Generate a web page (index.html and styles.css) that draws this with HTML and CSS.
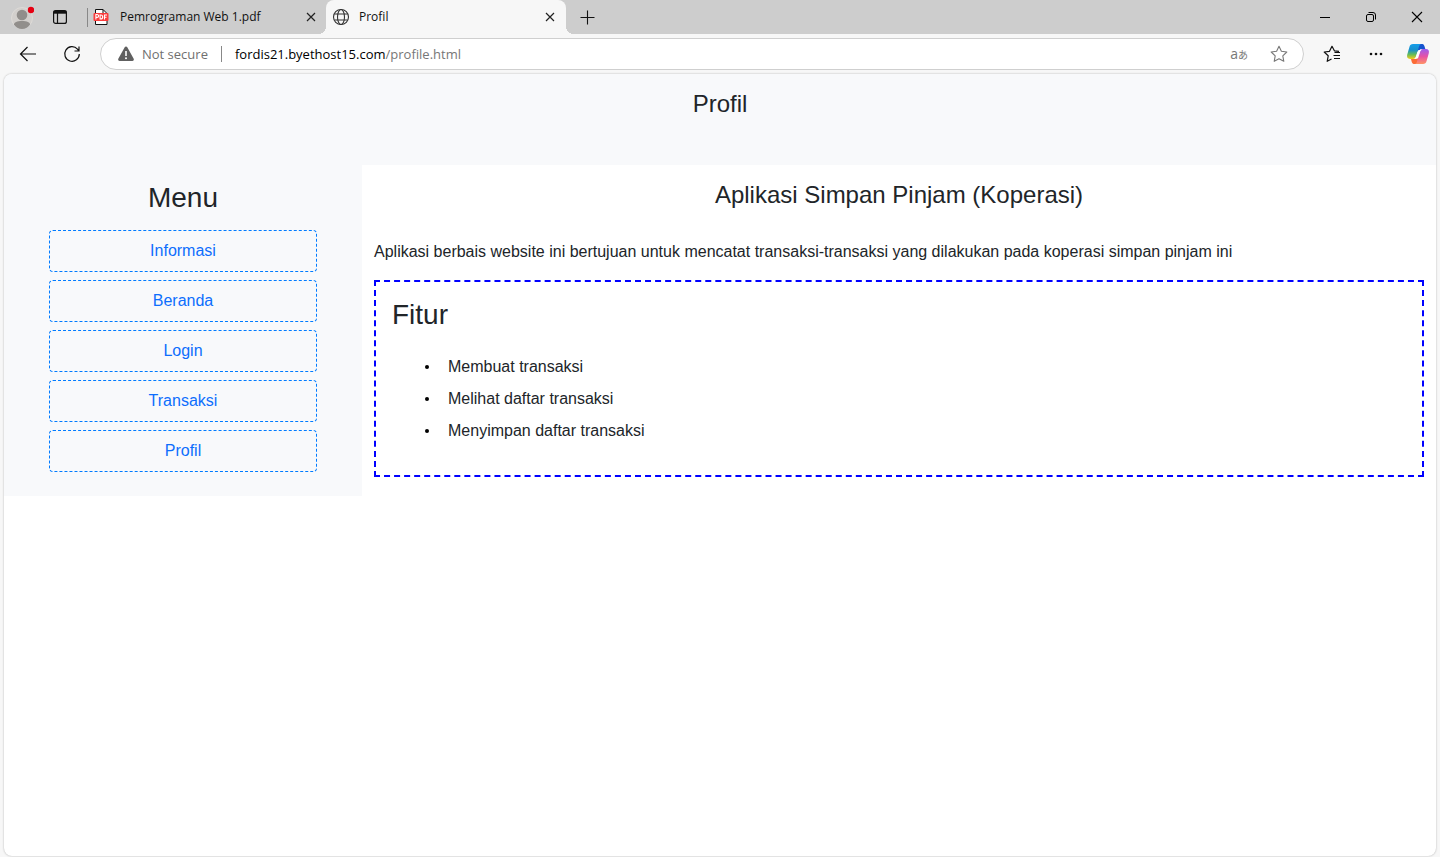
FILE: index.html
```html
<!DOCTYPE html>
<html lang="id">
<head>
<meta charset="utf-8">
<meta name="viewport" content="width=device-width, initial-scale=1">
<title>Profil</title>
<link rel="stylesheet" href="styles.css">
</head>
<body>
<div class="browser">
  <div class="tabstrip">
    <button class="icon-btn account" aria-label="Account">
      <svg width="24" height="24" viewBox="0 0 24 24"><circle cx="12" cy="13" r="10.5" fill="#d2cfcc" stroke="#dedbd8"/><circle cx="12" cy="10" r="5.3" fill="#918e8b"/><path d="M4 19.500c0-2.300 3-3.500 8-3.500s8 1.200 8 3.500c-1.500 2.500-4.500 4.500-8 4.500s-6.500-2-8-4.500z" fill="#918e8b"/><circle cx="21" cy="5" r="3.200" fill="#e60012"/></svg>
    </button>
    <button class="icon-btn workspace" aria-label="Tab actions">
      <svg width="16" height="16" viewBox="0 0 16 16" fill="none" stroke="#111" stroke-width="1.200"><rect x="1.600" y="1.600" width="12.800" height="12.800" rx="2"/><path d="M1.600 3.200h12.800" stroke-width="3"/><path d="M5.500 4v10.400"/></svg>
    </button>
    <div class="tab tab-pdf">
      <svg width="16" height="18" viewBox="0 0 16 18"><path d="M2.500 1.500h7.500l4 4v11H2.500z" fill="#fff" stroke="#111"/><path d="M10 1.500v4h4" fill="none" stroke="#111"/><rect x=".5" y="5" width="15" height="8" rx="1" fill="#fa3c3c"/><g fill="none" stroke="#fff" stroke-width="1.100"><path d="M2.900 11.500v-5h1.200a1.400 1.400 0 0 1 0 2.900H2.900M7.100 7v4h.6a2 2 0 0 0 0-4zM11.500 11.500V7h2.500M11.500 9.200h2"/></g></svg>
      <span class="tab-title">Pemrograman Web 1.pdf</span>
      <button class="tab-close" aria-label="Close tab"><svg width="10" height="10" viewBox="0 0 10 10"><path d="M1 1l8 8M9 1l-8 8" stroke="#222" stroke-width="1.200"/></svg></button>
    </div>
    <div class="tab tab-active">
      <svg width="18" height="18" viewBox="0 0 18 18" fill="none" stroke="#333" stroke-width="1.100"><circle cx="9" cy="9" r="7.500"/><ellipse cx="9" cy="9" rx="3.500" ry="7.500"/><path d="M2.300 6h13.400M2.300 12h13.400"/></svg>
      <span class="tab-title">Profil</span>
      <button class="tab-close" aria-label="Close tab"><svg width="10" height="10" viewBox="0 0 10 10"><path d="M1 1l8 8M9 1l-8 8" stroke="#222" stroke-width="1.200"/></svg></button>
    </div>
    <button class="icon-btn new-tab" aria-label="New tab"><svg width="15" height="15" viewBox="0 0 15 15"><path d="M7.500 .5v14M.5 7.500h14" stroke="#111" stroke-width="1.100"/></svg></button>
    <div class="window-controls">
      <button aria-label="Minimize"><svg width="12" height="12" viewBox="0 0 12 12"><path d="M1 6.500h10" stroke="#000"/></svg></button>
      <button aria-label="Restore"><svg width="12" height="12" viewBox="0 0 12 12" fill="none" stroke="#000"><rect x="1.500" y="3.500" width="7" height="7" rx="1.500"/><path d="M3.500 1.500H8a2.500 2.500 0 0 1 2.500 2.500v4.500"/></svg></button>
      <button aria-label="Close"><svg width="12" height="12" viewBox="0 0 12 12"><path d="M1 1l10 10M11 1L1 11" stroke="#000" stroke-width="1.100"/></svg></button>
    </div>
  </div>

  <div class="toolbar">
    <button class="icon-btn" aria-label="Back"><svg width="18" height="16" viewBox="0 0 18 16" fill="none" stroke="#111" stroke-width="1.200"><path d="M17 8H1.500M8.500 1l-7 7 7 7"/></svg></button>
    <button class="icon-btn" aria-label="Refresh"><svg width="18" height="18" viewBox="0 0 18 18" fill="none" stroke="#111" stroke-width="1.200"><path d="M16.300 9A7.300 7.300 0 1 1 14.500 4.200L16 6M16 1.500V6h-4.500"/></svg></button>
    <div class="address">
      <svg width="18" height="16" viewBox="0 0 18 16"><path d="M7.700 1.300a1.500 1.500 0 0 1 2.600 0l6.400 11.500a1.500 1.500 0 0 1-1.300 2.200H2.600a1.500 1.500 0 0 1-1.300-2.200z" fill="#606060"/><path d="M9 5v5" stroke="#fff" stroke-width="1.600"/><circle cx="9" cy="12.200" r="1" fill="#fff"/></svg>
      <span class="security">Not secure</span>
      <span class="url">fordis21.byethost15.com<span class="path">/profile.html</span></span>
      <button class="translate" aria-label="Translate">a<span class="kana">あ</span></button>
      <button class="favorite" aria-label="Add to favorites"><svg width="18" height="18" viewBox="0 0 18 18" fill="none" stroke="#777" stroke-width="1.100" stroke-linejoin="round"><path d="M9 1.300l2.400 5 5.400.7-4 3.800 1 5.500L9 13.700l-4.800 2.600 1-5.500-4-3.800 5.400-.7z"/></svg></button>
    </div>
    <div class="actions">
      <button class="icon-btn" aria-label="Favorites"><svg width="18" height="18" viewBox="0 0 18 18" fill="none" stroke="#111" stroke-width="1.200" stroke-linejoin="round"><path d="M16 6.300l-4.600-.5L9 1.300 6.500 6.300l-5.300.7 4 3.800-1 5.500L8.500 14M11.500 7.500H17M10.500 10.500H17M11 13.500H17"/></svg></button>
      <button class="icon-btn" aria-label="Settings and more"><svg width="16" height="4" viewBox="0 0 16 4" fill="#111"><circle cx="3" cy="2" r="1.300"/><circle cx="8" cy="2" r="1.300"/><circle cx="13" cy="2" r="1.300"/></svg></button>
      <button class="icon-btn" aria-label="Copilot">
        <svg width="24" height="22" viewBox="0 0 24 22">
          <defs>
            <linearGradient id="cool" x1="0" y1="0" x2="0" y2="1"><stop offset="0" stop-color="#159dea"/><stop offset=".4" stop-color="#1890cb"/><stop offset=".7" stop-color="#65bb59"/><stop offset="1" stop-color="#f6cc18"/></linearGradient>
            <linearGradient id="warm" x1="0" y1="0" x2="0" y2="1"><stop offset="0" stop-color="#9b5df0"/><stop offset=".5" stop-color="#e753a5"/><stop offset="1" stop-color="#ff9365"/></linearGradient>
          </defs>
          <path d="M12 1h4.500c1 0 1.600 1 2 2.300l.8 2.700h-4.500L11 9z" fill="#1553ce"/>
          <path d="M12 21H7.700c-1 0-1.700-1-2-2.200L5 16h4.500l3-4z" fill="#fb6b36"/>
          <path d="M7 1h8.500c-1.300 0-2 1-2.400 2.300l-3 9.800C9.500 15 8.500 16 7 16H4c-2.500 0-3.400-2-2.800-4.200l2.300-8C4 2 5 1 7 1z" fill="url(#cool)"/>
          <path d="M17 21H8.500c1.300 0 2-1 2.400-2.300l3-9.800C14.500 7 15.500 6 17 6h3c2.500 0 3.400 2 2.800 4.200l-2.300 8C20 20 19 21 17 21z" fill="url(#warm)"/>
          <path d="M13.300 7h2.200c-1 .6-1.400 1.500-1.700 2.500l-1.600 5c-.3.900-.8 1.300-1.500 1.300H8.500c1-.6 1.400-1.500 1.700-2.500l1.600-5c.3-.9.800-1.300 1.500-1.300z" fill="#fff"/>
        </svg>
      </button>
    </div>
  </div>

  <div class="page">
    <header class="page-header"><h1>Profil</h1></header>
    <div class="columns">
      <nav class="sidebar" aria-labelledby="menu-title">
        <h2 id="menu-title">Menu</h2>
        <a href="#informasi">Informasi</a>
        <a href="#beranda">Beranda</a>
        <a href="#login">Login</a>
        <a href="#transaksi">Transaksi</a>
        <a href="#profil">Profil</a>
      </nav>
      <main class="content">
        <h2 class="app-title">Aplikasi Simpan Pinjam (Koperasi)</h2>
        <p>Aplikasi berbais website ini bertujuan untuk mencatat transaksi-transaksi yang dilakukan pada koperasi simpan pinjam ini</p>
        <section class="features">
          <h3>Fitur</h3>
          <ul>
            <li>Membuat transaksi</li>
            <li>Melihat daftar transaksi</li>
            <li>Menyimpan daftar transaksi</li>
          </ul>
        </section>
      </main>
    </div>
  </div>
</div>
</body>
</html>
```
FILE: styles.css
```css
* {
  box-sizing: border-box;
}

body {
  margin: 0;
  font-family: "Liberation Sans", Arial, sans-serif;
  font-size: 16px;
  line-height: 24px;
  color: #212529;
}

button {
  margin: 0;
  padding: 0;
  border: 0;
  background: none;
  font: inherit;
  color: inherit;
}

svg {
  display: block;
  flex: none;
}

h1, h2, h3, p, ul {
  margin: 0;
  font-weight: 400;
}

.browser {
  display: flex;
  flex-direction: column;
  min-height: 100vh;
  background: #f7f7f7;
}

.icon-btn {
  display: flex;
  flex: none;
  align-items: center;
  justify-content: center;
  width: 44px;
  height: 32px;
}

/* Tab strip */
.tabstrip {
  display: flex;
  align-items: center;
  height: 34px;
  background: #cdcdcd;
  font-family: "Open Sans", "Noto Sans", sans-serif;
  font-size: 12px;
  color: #111;
}

.account {
  height: 34px;
}

.workspace {
  width: 32px;
}

.tab {
  display: flex;
  align-items: center;
  height: 34px;
  padding: 0 8px 0 6px;
}

.tab-title {
  flex: 1;
  white-space: nowrap;
}

.tab-pdf {
  gap: 11px;
  width: 239px;
  margin-left: 11px;
  padding-right: 7px;
  background: linear-gradient(#888, #888) 0 8px / 1px 19px no-repeat;
}

.tab-active {
  position: relative;
  gap: 9px;
  width: 240px;
  background: #f7f7f7;
  border-radius: 8px 8px 0 0;
}

.tab-active::before,
.tab-active::after {
  content: "";
  position: absolute;
  bottom: 0;
  width: 8px;
  height: 8px;
}

.tab-active::before {
  right: 100%;
  background: radial-gradient(circle at 0 0, transparent 8px, #f7f7f7 8px);
}

.tab-active::after {
  left: 100%;
  background: radial-gradient(circle at 100% 0, transparent 8px, #f7f7f7 8px);
}

.tab-close {
  display: flex;
  align-items: center;
  justify-content: center;
  width: 16px;
  height: 16px;
}

.new-tab {
  width: 42px;
  height: 34px;
}

.window-controls {
  display: flex;
  margin-left: auto;
}

.window-controls button {
  display: flex;
  align-items: center;
  justify-content: center;
  width: 46px;
  height: 34px;
}

/* Toolbar */
.toolbar {
  display: flex;
  align-items: center;
  height: 40px;
  padding-left: 6px;
  font-family: "Open Sans", "Noto Sans", sans-serif;
  font-size: 13px;
}

.address {
  display: flex;
  flex: 1;
  align-items: center;
  height: 32px;
  margin-left: 6px;
  padding: 0 15px 0 16px;
  border: 1px solid #cfcfcf;
  border-radius: 16px;
  background: #fff;
}

.security {
  margin-left: 7px;
  padding-right: 13px;
  line-height: 16px;
  border-right: 1px solid #888;
  color: #707070;
}

.url {
  flex: 1;
  margin-left: 13px;
  color: #000;
}

.path {
  color: #777;
}

.translate {
  margin-right: 22px;
  font-size: 14px;
  color: #777;
}

.kana {
  font-family: "Noto Sans CJK JP", sans-serif;
  font-size: 10px;
}

.actions {
  display: flex;
  padding-left: 6px;
}

.actions .icon-btn:last-child {
  width: 42px;
  padding-right: 2px;
}

/* Web page */
.page {
  flex: 1;
  margin: 0 4px 1px;
  overflow: hidden;
  border-radius: 8px;
  background: #fff;
  box-shadow: 0 0 2px #aaa;
}

.page-header {
  padding: 16px 12px 47px;
  background: #f8f9fb;
  text-align: center;
}

.page-header h1,
.app-title {
  font-size: 24px;
  line-height: 28px;
}

.columns {
  display: flex;
}

.sidebar {
  display: flex;
  flex-direction: column;
  align-items: center;
  gap: 8px;
  width: 25%;
  padding: 16px 0 24px;
  background: #f8f9fb;
}

.sidebar h2 {
  margin-bottom: 7px;
}

.sidebar h2,
.features h3 {
  font-size: 28px;
  line-height: 34px;
}

.sidebar a {
  width: 75%;
  padding: 8px;
  border: 1px dashed #007bff;
  border-radius: 4px;
  color: #0d6efd;
  text-align: center;
  text-decoration: none;
}

.content {
  flex: 1;
  padding: 16px 12px;
}

.app-title {
  margin-bottom: 31px;
  text-align: center;
}

.features {
  margin-top: 16px;
  padding: 16px 16px 28px;
  border: 2px dashed #00f;
}

.features ul {
  margin-top: 19px;
  padding-left: 32px;
  list-style: none;
}

.features li {
  display: flex;
  align-items: center;
  gap: 19px;
  line-height: 32px;
}

.features li::before {
  content: "";
  width: 4px;
  height: 4px;
  margin-left: 1px;
  border-radius: 50%;
  background: #000;
}
```
